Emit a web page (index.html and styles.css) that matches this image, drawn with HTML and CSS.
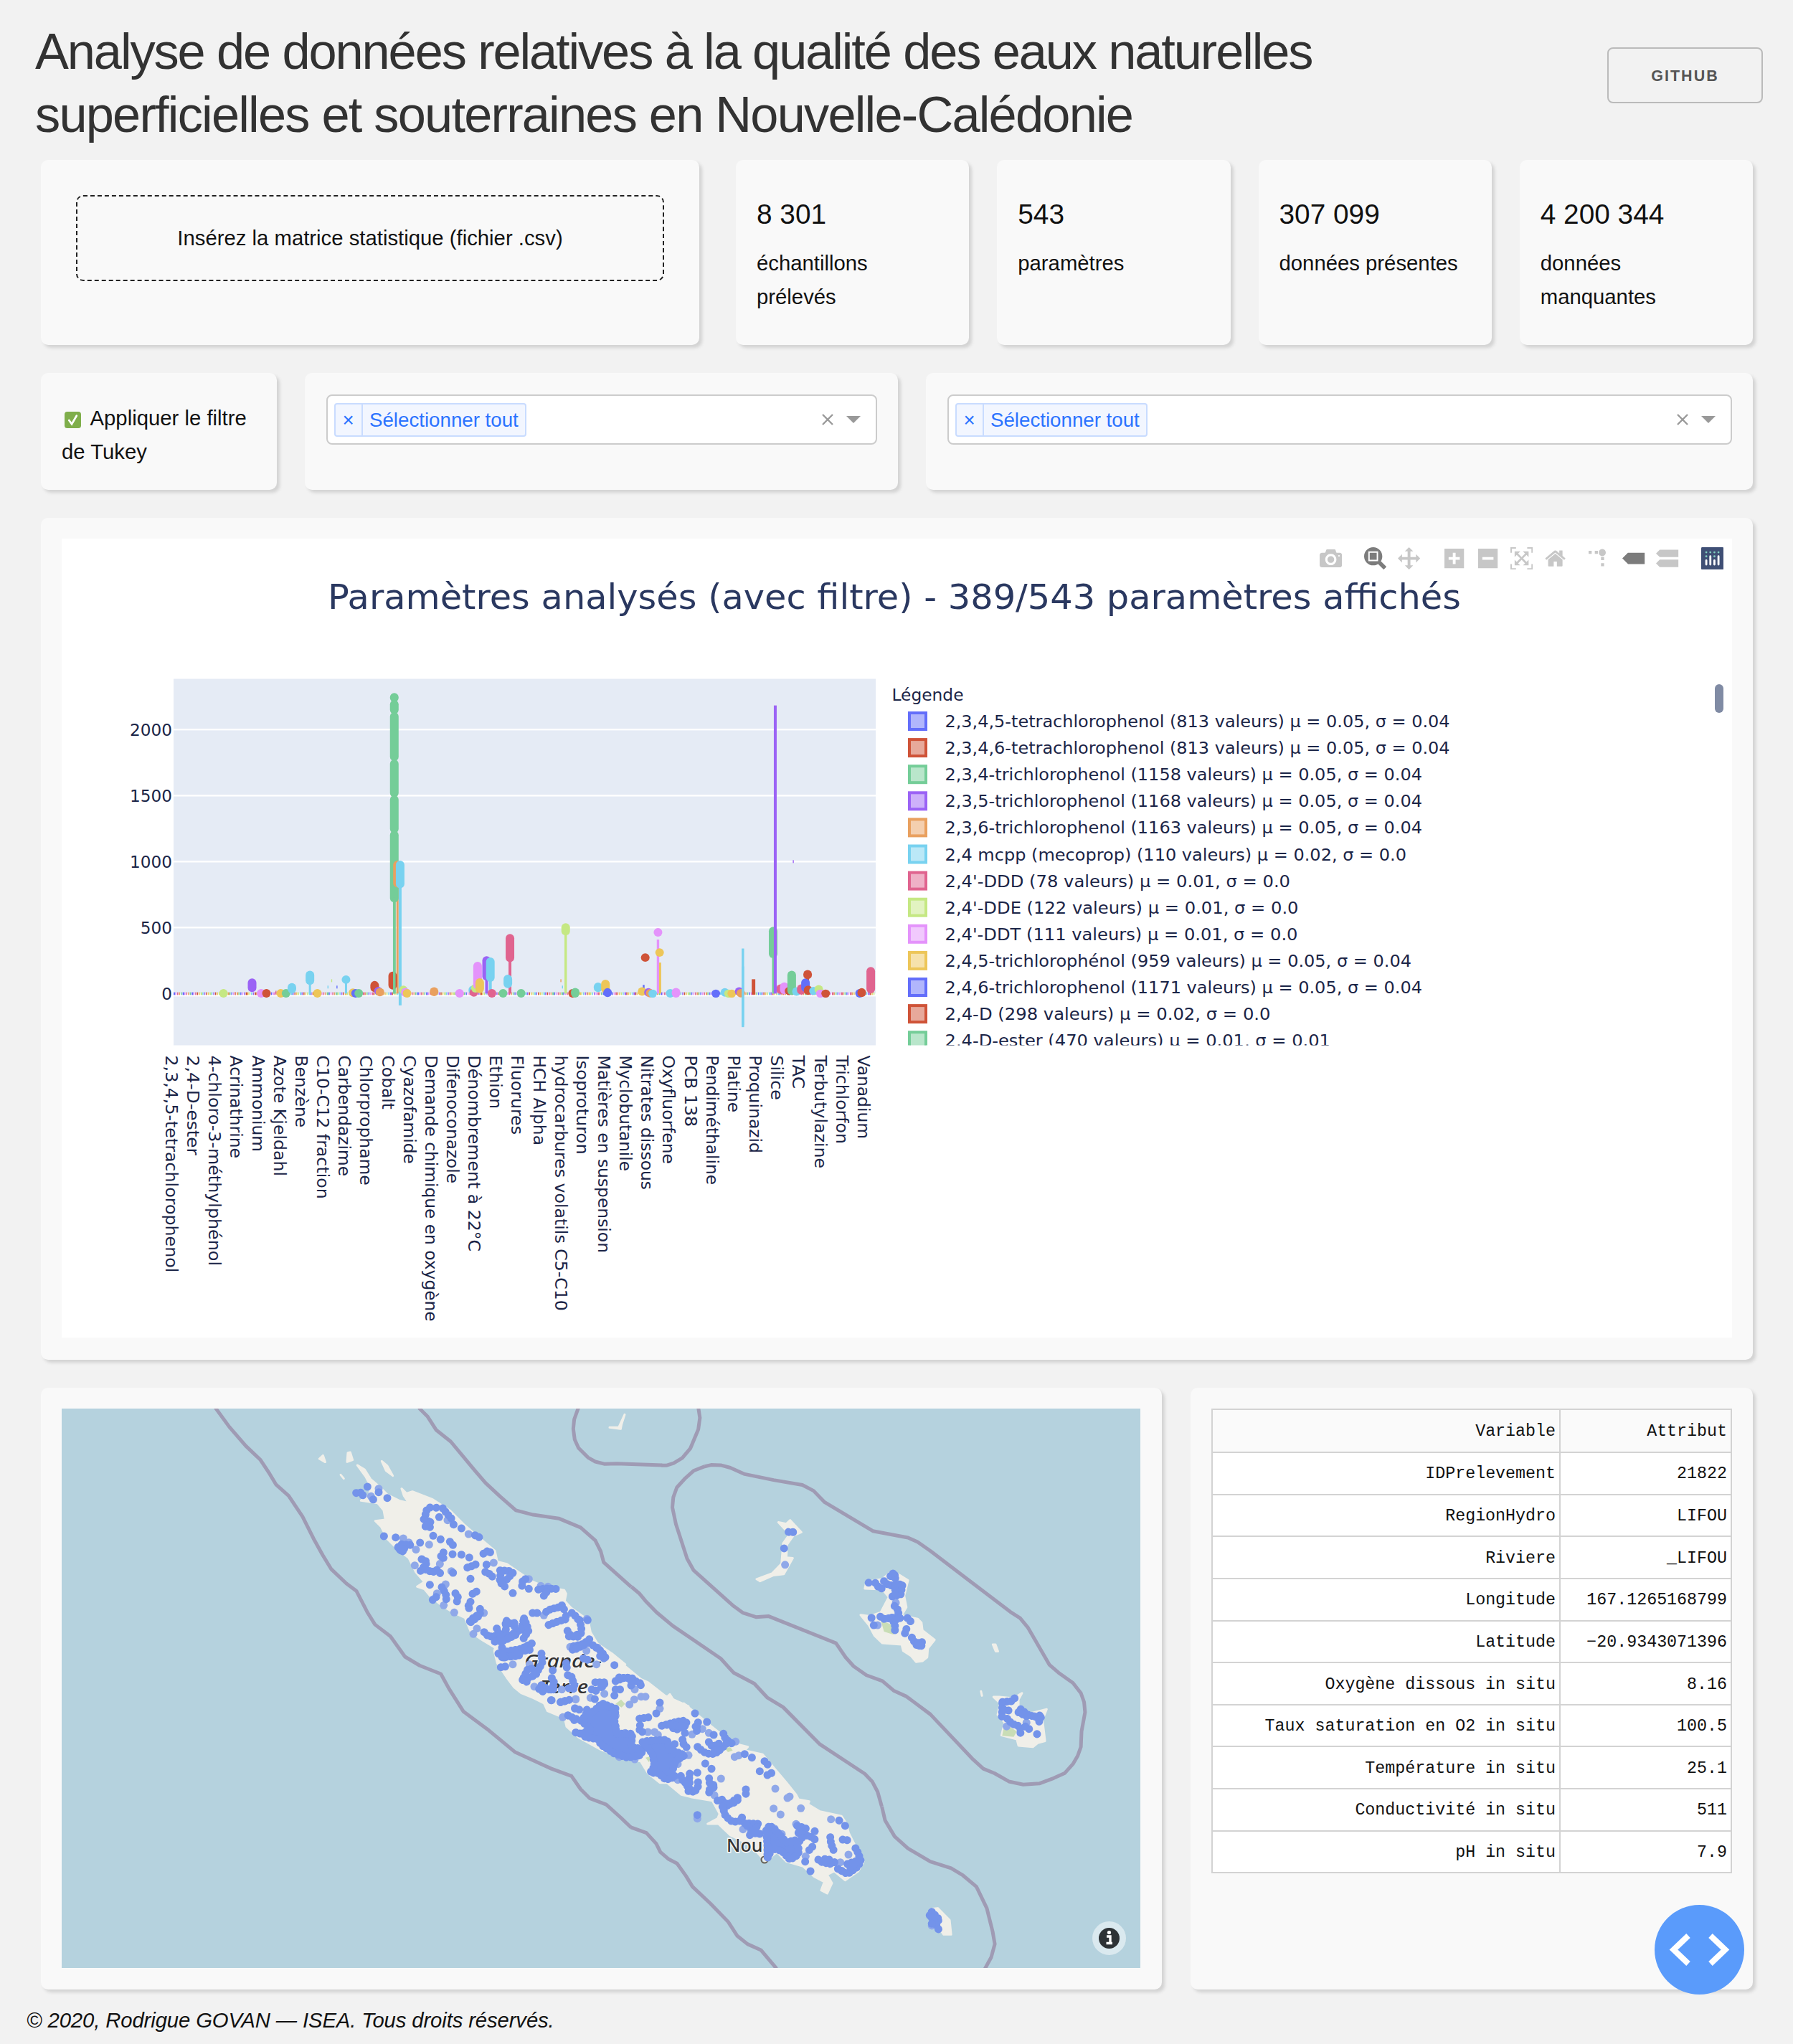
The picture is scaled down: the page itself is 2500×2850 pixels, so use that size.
FILE: index.html
```html
<!DOCTYPE html>
<html lang="fr">
<head>
<meta charset="utf-8">
<title>Qualité des eaux en Nouvelle-Calédonie</title>
<link rel="stylesheet" href="styles.css">
</head>
<body>
<header class="header">
  <h1 class="title"><span class="title-first">Analyse de données relatives à la qualité des eaux naturelles</span><br>superficielles et souterraines en Nouvelle-Calédonie</h1>
  <a class="github">GITHUB</a>
</header>

<main class="content">
  <section class="row row-stats">
    <div class="card card-upload"><div class="dropzone">Insérez la matrice statistique (fichier .csv)</div></div>
    <div class="stats">
      <div class="card stat"><strong class="stat-value">8 301</strong><span>échantillons prélevés</span></div>
      <div class="card stat"><strong class="stat-value">543</strong><span>paramètres</span></div>
      <div class="card stat"><strong class="stat-value">307 099</strong><span>données présentes</span></div>
      <div class="card stat"><strong class="stat-value">4 200 344</strong><span>données manquantes</span></div>
    </div>
  </section>

  <section class="row row-filters">
    <div class="card card-check">
      <svg class="check" viewBox="0 0 24 24"><rect width="24" height="24" rx="4" fill="#7fae4b"/><path d="M6.5 12.5l4 5.5L17.5 6" fill="none" stroke="#fff" stroke-width="2.8" stroke-linecap="round"/></svg>
      Appliquer le filtre<br>de Tukey
    </div>
    <div class="card card-select">
      <div class="select">
        <span class="chip"><span class="chip-x">×</span><span class="chip-label">Sélectionner tout</span></span>
        <svg class="clear" viewBox="0 0 18 18"><path d="M2 2L16 16M16 2L2 16" stroke="#999" stroke-width="2.4"/></svg>
        <span class="arrow"></span>
      </div>
    </div>
    <div class="card card-select card-select-wide">
      <div class="select">
        <span class="chip"><span class="chip-x">×</span><span class="chip-label">Sélectionner tout</span></span>
        <svg class="clear" viewBox="0 0 18 18"><path d="M2 2L16 16M16 2L2 16" stroke="#999" stroke-width="2.4"/></svg>
        <span class="arrow"></span>
      </div>
    </div>
  </section>

  <section class="card card-chart">
    <div class="chart">
      <svg class="chart-svg" viewBox="86 752 2328 1114">
        <text class="chart-title" x="457" y="850" textLength="1580" lengthAdjust="spacingAndGlyphs">Paramètres analysés (avec filtre) - 389/543 paramètres affichés</text>
        <rect x="242" y="947.5" width="979" height="511" fill="#e5ebf5"/>
        <g id="grid"></g>
        <g id="traces"></g>
        <g id="labels"></g>
        <clipPath id="legend-clip"><rect x="1240" y="940" width="1160" height="518.5"/></clipPath>
        <g id="legend" clip-path="url(#legend-clip)"></g>
        <rect x="2391" y="955" width="12" height="40" rx="6" fill="#808ba4"/>
      </svg>
      <div class="modebar">
        <span class="tools"><svg viewBox="0 0 1000 1000"><path transform="matrix(1 0 0 -1 0 850)" d="m500 450c-83 0-150-67-150-150 0-83 67-150 150-150 83 0 150 67 150 150 0 83-67 150-150 150z m400 150h-120c-16 0-34 13-39 29l-31 93c-6 15-23 28-40 28h-340c-16 0-34-13-39-28l-31-94c-6-15-23-28-40-28h-120c-55 0-100-45-100-100v-450c0-55 45-100 100-100h800c55 0 100 45 100 100v450c0 55-45 100-100 100z m-400-550c-138 0-250 112-250 250 0 138 112 250 250 250 138 0 250-112 250-250 0-138-112-250-250-250z m365 380c-19 0-35 16-35 35 0 19 16 35 35 35 19 0 35-16 35-35 0-19-16-35-35-35z"/></svg></span>
        <span class="tools"><svg class="active" viewBox="0 0 1000 1000"><path transform="matrix(1 0 0 -1 0 850)" d="m1000-25l-250 251c40 63 63 138 63 218 0 224-182 406-407 406-224 0-406-182-406-406s183-406 407-406c80 0 155 22 218 62l250-250 125 125z m-812 250l0 438 437 0 0-438-437 0z m62 375l313 0 0-312-313 0 0 312z"/></svg><svg viewBox="0 0 1000 1000"><path transform="matrix(1 0 0 -1 0 850)" d="m1000 350l-187 188 0-125-250 0 0 250 125 0-188 187-187-187 125 0 0-250-250 0 0 125-188-188 186-187 0 125 252 0 0-250-125 0 187-188 188 188-125 0 0 250 250 0 0-126 187 188z"/></svg></span>
        <span class="tools"><svg viewBox="0 0 875 1000"><path transform="matrix(1 0 0 -1 0 850)" d="m1 787l0-875 875 0 0 875-875 0z m687-500l-187 0 0-187-125 0 0 187-188 0 0 125 188 0 0 187 125 0 0-187 187 0 0-125z"/></svg><svg viewBox="0 0 875 1000"><path transform="matrix(1 0 0 -1 0 850)" d="m0 788l0-876 875 0 0 876-875 0z m688-500l-500 0 0 125 500 0 0-125z"/></svg><svg viewBox="0 0 1000 1000"><path transform="matrix(1 0 0 -1 0 850)" d="m250 850l-187 0-63 0 0-62 0-188 63 0 0 188 187 0 0 62z m688 0l-188 0 0-62 188 0 0-188 62 0 0 188 0 62-62 0z m-875-938l0 188-63 0 0-188 0-62 63 0 187 0 0 62-187 0z m875 188l0-188-188 0 0-62 188 0 62 0 0 62 0 188-62 0z m-125 188l-1 0-93-94-156 156 156 156 92-93 2 0 0 250-250 0 0-2 93-92-156-156-156 156 94 92 0 2-250 0 0-250 0 0 93 93 157-156-157-156-93 94 0 0 0-250 250 0 0 0-94 93 156 157 156-157-93-93 0 0 250 0 0 250z"/></svg><svg viewBox="0 0 928.6 1000"><path transform="matrix(1 0 0 -1 0 850)" d="m786 296v-267q0-15-11-26t-25-10h-214v214h-143v-214h-214q-15 0-25 10t-11 26v267q0 1 0 2t0 2l321 264 321-264q1-1 1-4z m124 39l-34-41q-5-5-12-6h-2q-7 0-12 3l-386 322-386-322q-7-4-13-4-7 2-12 7l-35 41q-4 5-3 13t6 12l401 334q18 15 42 15t43-15l136-114v109q0 8 5 13t13 5h107q8 0 13-5t5-13v-227l122-102q5-5 6-12t-4-13z"/></svg></span>
        <span class="tools"><svg viewBox="0 0 1000 1000"><path transform="matrix(1.5 0 0 -1.5 0 850)" d="M512 409c0-57-46-104-103-104-57 0-104 47-104 104 0 57 47 103 104 103 57 0 103-46 103-103z m-327-39l92 0 0 92-92 0z m-185 0l92 0 0 92-92 0z m370-186l92 0 0 93-92 0z m0-184l92 0 0 92-92 0z"/></svg><svg class="active" viewBox="0 0 1500 1000"><path transform="matrix(1 0 0 -1 0 850)" d="m375 725l0 0-375-375 375-374 0-1 1125 0 0 750-1125 0z"/></svg><svg viewBox="0 0 1125 1000"><path transform="matrix(1 0 0 -1 0 850)" d="m187 786l0 2-187-188 188-187 0 0 937 0 0 373-938 0z m0-499l0 1-187-188 188-188 0 0 937 0 0 376-938-1z"/></svg></span>
        <span class="tools"><svg class="brand" viewBox="0 0 132 132"><rect width="132" height="132" rx="6" fill="#3f4f75"/><g fill="#80cfbe"><circle cx="30" cy="30" r="6"/><circle cx="54" cy="30" r="6"/><circle cx="78" cy="30" r="6"/><circle cx="102" cy="30" r="6"/><circle cx="30" cy="54" r="6"/><circle cx="78" cy="54" r="6"/></g><path d="M30 78v24M54 54v48M78 78v24M102 54v48" stroke="#fff" stroke-width="12" stroke-linecap="round"/></svg></span>
      </div>
    </div>
  </section>

  <section class="row row-map">
    <div class="card card-map">
      <svg class="map" viewBox="86 1965 1504 780">
        <rect x="86" y="1965" width="1504" height="780" fill="#b5d2de"/>
        <g id="land" class="land"></g>
        <g id="parks" class="parks"></g>
        <g id="borders" class="borders"></g>
        <g class="places">
          <text x="731" y="2326" font-style="italic" textLength="108" lengthAdjust="spacingAndGlyphs">Grande-</text>
          <text x="753" y="2362" font-style="italic" textLength="67" lengthAdjust="spacingAndGlyphs">Terre</text>
          <text x="1013" y="2583">Nouméa</text>
          <circle cx="1066" cy="2594" r="4.5" fill="none" stroke="#665f55" stroke-width="2"/>
        </g>
        <g id="light" class="dots light"></g>
        <g id="solid" class="dots solid"></g>
        <circle cx="1546.5" cy="2703.5" r="23.5" fill="#fff" fill-opacity=".5"/>
        <circle cx="1546.5" cy="2703.5" r="14.5" fill="#2d3235"/>
        <path d="M1543 2701h5v9M1542.500 2710.500h8.500" fill="none" stroke="#fff" stroke-width="3.4"/><circle cx="1546.500" cy="2695.500" r="2.600" fill="#fff"/>
      </svg>
    </div>
    <div class="card card-table">
      <table class="table">
        <colgroup><col class="col-name"><col class="col-value"></colgroup>
        <thead><tr><th>Variable</th><th>Attribut</th></tr></thead>
        <tbody>
          <tr><td>IDPrelevement</td><td>21822</td></tr>
          <tr><td>RegionHydro</td><td>LIFOU</td></tr>
          <tr><td>Riviere</td><td>_LIFOU</td></tr>
          <tr><td>Longitude</td><td>167.1265168799</td></tr>
          <tr><td>Latitude</td><td>−20.9343071396</td></tr>
          <tr><td>Oxygène dissous in situ</td><td>8.16</td></tr>
          <tr><td>Taux saturation en O2 in situ</td><td>100.5</td></tr>
          <tr><td>Température in situ</td><td>25.1</td></tr>
          <tr><td>Conductivité in situ</td><td>511</td></tr>
          <tr><td>pH in situ</td><td>7.9</td></tr>
        </tbody>
      </table>
      <svg class="debug" viewBox="0 0 125 125"><circle cx="62.5" cy="62.5" r="62.5" fill="#5a9bfb"/><path d="M47 43L26.500 62.500 47 82M78 43L98.500 62.500 78 82" fill="none" stroke="#fff" stroke-width="8"/></svg>
    </div>
  </section>
</main>
<footer class="footer">© 2020, Rodrigue GOVAN — ISEA. Tous droits réservés.</footer>
<script src="script.js"></script>
</body>
</html>
```

FILE: styles.css
```css
* { box-sizing: border-box; }

body {
  margin: 0;
  height: 2850px;
  overflow: hidden;
  background: #f2f2f2;
  color: #111;
  font-family: "Liberation Sans", Arial, sans-serif;
  font-size: 29.3px;
  line-height: 47px;
}

.header {
  display: flex;
  justify-content: space-between;
  align-items: flex-start;
  height: 223px;
  padding: 28px 42px 0 49px;
}

.title {
  margin: 0;
  font-size: 70.4px;
  font-weight: 400;
  line-height: 88px;
  letter-spacing: -1.8px;
  color: #323232;
}
.title-first { letter-spacing: -2.12px; }

.github {
  width: 217px;
  height: 78px;
  margin-top: 38px;
  border: 2px solid #bbb;
  border-radius: 8px;
  color: #555;
  font-size: 21.5px;
  font-weight: 700;
  line-height: 76px;
  letter-spacing: 2px;
  text-align: center;
}

.content { padding: 0 56px 0 57px; }

.row { display: flex; }

.card {
  background: #f9f9f9;
  border-radius: 10px;
  box-shadow: 4px 4px 4px lightgrey;
}

.row-stats { height: 258px; gap: 51px; margin-bottom: 39px; }
.card-upload { width: 918px; padding: 49px; }
.dropzone {
  height: 120px;
  border: 2px dashed #222;
  border-radius: 10px;
  line-height: 116px;
  text-align: center;
}
.stats { flex: 1; display: grid; grid-template-columns: repeat(4, 1fr); gap: 39px; }
.stat { display: flex; flex-direction: column; padding: 49px 29px 0; }
.stat-value { margin-bottom: 18px; font-size: 38.8px; font-weight: 400; line-height: 53px; }

.row-filters { height: 163px; gap: 39px; margin-bottom: 39px; }
.card-check { width: 329px; padding: 39px 20px 0 29px; }
.check { width: 23px; height: 23px; margin: 0 6px 0 4px; vertical-align: -4px; }
.card-select { width: 827px; padding: 29.500px; }
.card-select-wide { width: auto; flex: 1; }
.select {
  display: flex;
  align-items: center;
  height: 70px;
  padding: 0 21px 0 9px;
  background: #fff;
  border: 2px solid #ccc;
  border-radius: 8px;
}
.chip {
  display: flex;
  height: 47px;
  margin-right: auto;
  margin-top: 2px;
  background: #f2f6ff;
  border: 2px solid #c9dcff;
  border-radius: 4px;
  color: #2b73ff;
  font-size: 27.7px;
  line-height: 43px;
}
.chip-x { width: 38px; border-right: 2px solid #c9dcff; text-align: center; }
.chip-label { padding: 0 9.500px; }
.clear { width: 18px; height: 18px; margin-right: 17px; }
.arrow { border: 10px solid transparent; border-top-color: #999; border-bottom: 0; }

.card-chart { height: 1174px; padding: 29px; margin-bottom: 39px; }
.chart { position: relative; height: 1114px; background: #fff; }
.chart-svg { display: block; width: 2328px; height: 1114px; }
.chart-svg text { font-family: "DejaVu Sans", Verdana, sans-serif; font-size: 23.2px; fill: #1b2547; }
.chart-svg .chart-title { font-size: 48.5px; fill: #2a3860; }

.modebar { position: absolute; top: 12px; right: 4px; display: flex; gap: 15.600px; }
.tools { display: flex; }
.tools svg { width: 31.200px; height: 31.200px; margin: 0 7.900px; fill: #c7c7c7; }
.tools .active { fill: #7c7c7c; }

.row-map { height: 839px; gap: 40px; }
.card-map { width: 1563px; padding: 29px; }
.map { display: block; width: 1504px; height: 780px; }
.land { fill: #f0efe9; stroke: #f0efe9; stroke-width: 3px; stroke-linejoin: round; }
.parks { fill: #c9ddb6; }
.borders { fill: none; stroke: #9f9bb4; stroke-width: 5px; stroke-linejoin: round; }
.places text { font-family: "Noto Sans", sans-serif; font-size: 25px; font-weight: 500; fill: #333; stroke: #f7f6f3; stroke-width: 3px; paint-order: stroke; }
.dots { stroke-width: 11px; stroke-linecap: round; stroke-linejoin: round; stroke-dasharray: .1 6; fill: none; }
.light { stroke: #8fa8e9; }
.solid { stroke: #7393ea; }
.solid .area { fill: #7393ea; }
.map path { vector-effect: non-scaling-stroke; }

.card-table { position: relative; flex: 1; padding: 29px; }
.table {
  width: 726px;
  border-collapse: collapse;
  table-layout: fixed;
  background: #fff;
  font-family: "Liberation Mono", "Courier New", monospace;
  font-size: 23.3px;
  line-height: 30px;
}
.col-name { width: 485px; }
.table th, .table td {
  height: 58.650px;
  padding: 2px 5px 0 0;
  border: 2px solid #d3d3d3;
  font-weight: 400;
  text-align: right;
}
.table th { height: 60px; background: #fafafa; }
.debug { position: absolute; right: 12px; bottom: -7px; width: 125px; height: 125px; }

.footer { padding: 19px 0 0 37px; font-style: italic; letter-spacing: -.12px; }
```

FILE: script.js
```js
const NS = 'http://www.w3.org/2000/svg';
function add(parent, tag, attrs, text) {
  const el = document.createElementNS(NS, tag);
  for (const k in attrs) el.setAttribute(k, attrs[k]);
  if (text) el.textContent = text;
  document.getElementById(parent).appendChild(el);
  return el;
}

const C = { b: '#636efa', r: '#cf5338', g: '#74cd98', p: '#9b63f5', o: '#e9a05f', c: '#78d2f0', k: '#e0648f', l: '#c5e883', m: '#e493fb', y: '#edc659' };
const order = 'brgpocklmy';

/* Box plot: axis, then whiskers, then outlier runs */
const X = v => 80 + v * 0.7398;
const Y = w => 920 + w * 0.3571;

[[2000, 275], [1500, 533], [1000, 790.5], [500, 1048], [0, 1306]].forEach(([n, w]) => {
  add('grid', 'rect', { x: 242, y: Y(w) - (n ? 1.2 : 0), width: 979, height: n ? 2.4 : 4, fill: '#fff' });
  add('labels', 'text', { x: 240, y: Y(w) + 8.3, 'text-anchor': 'end' }, String(n));
});

for (let i = 0; i < 389; i++) {
  const color = C[order[(i * 7 + (i % 13)) % 10]];
  add('traces', 'rect', { x: 242 + i * 2.515, y: 1384.6, width: i % 5 ? 1.5 : 2.4, height: 3.8, fill: color });
}
[[335, 1300, 'o'], [412, 1295, 'k'], [517, 1250, 'l'], [510, 1275, 'c'], [527, 1275, 'b'], [949, 1250, 'o'], [952, 1275, 'c'], [1387, 785, 'p']].forEach(([x, y, c]) =>
  add('traces', 'rect', { x: X(x) - 0.7, y: Y(y), width: 1.4, height: 4, fill: C[c] }));

const runs = [
  [313,1288,1322,'l'],[367,1247,1300,'p'],[384,1288,1322,'m'],[394,1288,1322,'r'],[421,1288,1322,'y'],[431,1288,1322,'g'],[442,1265,1305,'c'],[476,1217,1272,'c'],
  [490,1288,1322,'y'],[544,1235,1268,'c'],[557,1286,1320,'y'],[562,1288,1322,'b'],[568,1288,1322,'g'],[598,1257,1300,'r'],[605,1280,1312,'p'],[608,1284,1317,'o'],[632,1220,1290,'r'],
  [652,1275,1308,'l'],[656,1284,1320,'m'],[659,1288,1322,'y'],[641,787,892,'o'],[710,1281,1316,'o'],[758,1288,1322,'m'],[783,1275,1310,'c'],[785,1285,1318,'k'],[788,1268,1302,'l'],
  [792,1182,1290,'m'],[796,1246,1304,'y'],[809,1160,1255,'p'],[816,1165,1260,'c'],[819,1288,1322,'k'],[840,1288,1322,'g'],[849,1232,1285,'c'],[853,1073,1183,'k'],[874,1288,1322,'g'],
  [958,1031,1079,'l'],[971,1288,1322,'r'],[976,1284,1322,'g'],[1019,1263,1300,'c'],[1033,1252,1305,'y'],[1037,1285,1320,'b'],[1102,1281,1315,'y'],[1108,1149,1182,'r'],[1114,1285,1318,'p'],
  [1117,1288,1321,'o'],[1122,1290,1322,'c'],[1132,1050,1084,'m'],[1135,1129,1162,'y'],[1155,1288,1322,'c'],[1166,1284,1322,'m'],[1241,1290,1322,'b'],[1258,1285,1318,'c'],
  [1265,1290,1322,'l'],[1271,1290,1322,'y'],[1285,1281,1315,'p'],[1288,1288,1321,'o'],[1349,1045,1168,'g'],[1363,1270,1308,'k'],[1370,1262,1308,'m'],[1379,1280,1312,'r'],
  [1384,1217,1312,'g'],[1393,1281,1315,'c'],[1402,1270,1310,'k'],[1410,1247,1300,'b'],[1414,1214,1250,'r'],[1415,1275,1311,'r'],[1425,1280,1312,'c'],[1435,1273,1307,'l'],
  [1438,1290,1322,'m'],[1448,1290,1322,'r'],[1512,1288,1322,'b'],[1516,1285,1320,'r'],[1533,1202,1305,'k']
];
const stems = [
  [635,940,1306,'g',3.6],[641,850,1306,'o',3],[646,880,1352,'c',4],[476,1260,1306,'c',3],[544,1260,1306,'c',3],[853,1170,1306,'k',4],[809,1250,1306,'p',4],[816,1250,1300,'c',4],
  [958,1070,1306,'l',3.4],[1132,1095,1306,'m',3.4],[1136,1185,1306,'y',3],[1105,1272,1290,'b',2.5],[1292,1130,1437,'c',3.4],[1312,1250,1310,'r',5],[1414,1240,1290,'r',4],[1349,1160,1306,'g',3]
];
stems.forEach(([x, a, b, c, w]) => add('traces', 'rect', { x: X(x) - w / 2, y: Y(a), width: w, height: Y(b) - Y(a), fill: C[c] }));
const capsule = (x, a, b, c) => add('traces', 'rect', { x: X(x) - 6, y: Y(a), width: 12, height: Y(b) - Y(a), rx: 6, fill: C[c] });
[[132, 168], [160, 215], [207, 398], [392, 540], [532, 680], [670, 950]].forEach(([a, b]) => capsule(635, a, b, 'g'));
runs.forEach(r => capsule(...r));
capsule(646, 787, 895, 'c');
add('traces', 'rect', { x: X(635) - 1.8, y: Y(930), width: 3.6, height: Y(1306) - Y(930), fill: C.g });
add('traces', 'rect', { x: X(1353) - 2, y: Y(181), width: 4, height: Y(1306) - Y(181), fill: C.p });
add('traces', 'rect', { x: X(1292) - 1.7, y: Y(1200), width: 3.4, height: Y(1430) - Y(1200), fill: C.c });

const ticks = [['2,3,4,5-tetrachlorophenol',1774.3],['2,4-D-ester',1610.7],['4-chloro-3-méthylphénol',1765],['Acrinathrine',1615],['Ammonium',1606],['Azote Kjeldahl',1640],['Benzène',1572],['C10-C12 fraction',1671.7],['Carbendazime',1640],['Chlorprophame',1652.7],['Cobalt',1547],['Cyazofamide',1622.7],['Demande chimique en oxygène',1842.7],['Difenoconazole',1650],['Dénombrement à 22°C',1745],['Ethion',1546],['Fluorures',1582],['HCH Alpha',1597],['hydrocarbures volatils C5-C10',1827.7],['Isoproturon',1609.7],['Matières en suspension',1747],['Myclobutanile',1633],['Nitrates dissous',1659],['Oxyfluorfene',1623],['PCB 138',1571],['Pendiméthaline',1652],['Platine',1551],['Proquinazid',1608],['Silice',1533.7],['TAC',1518],['Terbutylazine',1629],['Trichlorfon',1595],['Vanadium',1588]];
ticks.forEach(([t, end], i) => {
  const x = 231 + i * 30.15;
  add('labels', 'text', { transform: `translate(${x} 1472.5) rotate(90)`, textLength: end - 1471.5, lengthAdjust: 'spacingAndGlyphs' }, t);
});

add('legend', 'text', { x: 1243.5, y: 977.5, textLength: 100, lengthAdjust: 'spacingAndGlyphs' }, 'Légende');
[['2,3,4,5-tetrachlorophenol (813 valeurs) μ = 0.05, σ = 0.04',2020.5],['2,3,4,6-tetrachlorophenol (813 valeurs) μ = 0.05, σ = 0.04',2020.5],['2,3,4-trichlorophenol (1158 valeurs) μ = 0.05, σ = 0.04',1982],['2,3,5-trichlorophenol (1168 valeurs) μ = 0.05, σ = 0.04',1982],['2,3,6-trichlorophenol (1163 valeurs) μ = 0.05, σ = 0.04',1982],['2,4 mcpp (mecoprop) (110 valeurs) μ = 0.02, σ = 0.0',1960],["2,4'-DDD (78 valeurs) μ = 0.01, σ = 0.0",1798],["2,4'-DDE (122 valeurs) μ = 0.01, σ = 0.0",1809.5],["2,4'-DDT (111 valeurs) μ = 0.01, σ = 0.0",1808.5],['2,4,5-trichlorophénol (959 valeurs) μ = 0.05, σ = 0.04',1967],['2,4,6-trichlorophenol (1171 valeurs) μ = 0.05, σ = 0.04',1982],['2,4-D (298 valeurs) μ = 0.02, σ = 0.0',1770.5],['2,4-D-ester (470 valeurs) μ = 0.01, σ = 0.01',1854]].forEach(([t, end], i) => {
  const y = 1006.5 + i * 37.1, c = C[order[i % 10]];
  add('legend', 'rect', { x: 1268, y: y - 11.5, width: 23, height: 23, fill: c, 'fill-opacity': 0.5, stroke: c, 'stroke-width': 4 });
  add('legend', 'text', { x: 1317.5, y: y + 8.5, textLength: end - 1316.5, lengthAdjust: 'spacingAndGlyphs' }, t);
});

/* Map tiles: each one has its own origin and scale */
const T = {
  a: 'translate(80 1960) scale(.5102)',
  n: 'translate(460 1960) scale(.33333)',
  s: 'translate(730 2340) scale(.33333)',
  l: 'translate(900 1960) scale(.4464 .3571)',
  p: 'translate(750 2250) scale(.4145 .3333)'
};
const draw = (layer, tile, pts, closed, cls) => add(layer, 'path', { d: 'M' + pts + (pts.indexOf(' ') < 0 ? 'h.01' : closed ? 'Z' : ''), transform: T[tile], class: cls || '' });

[['n','300,350 320,370 345,362 430,395 500,440 560,500 630,560 690,610 700,655 740,665 790,700 850,740 900,760 980,775 988,790 982,820 1010,850 1080,900 1090,950 1120,1000 1180,1040 1235,1085 1215,1100 1260,1130 1330,1160 1400,1215 1500,1260 1500,1500 1000,1300 900,1250 850,1225 800,1205 770,1180 740,1140 700,1080 688,1030 690,1015 640,985 590,950 565,890 520,870 470,840 420,800 395,770 365,760 395,740 360,700 330,640 280,600 240,560 215,510 190,485 232,480 225,440 200,410 130,400 165,375 170,340 150,300 115,252 145,270 170,310 205,340 240,375 290,400 330,410 310,380'],
 ['n','217,235 240,255 263,296 235,275'],['n','75,200 85,198 95,230 72,238'],['n','45,292 58,308'],
 ['n','1170,94 1208,94 1233,40 1220,80 1216,100 1204,98'],['a','716,147 726,138 732,156'],
 ['s','500,15 530,30 570,70 580,100 612,70 655,140 672,140 670,108 720,150 780,200 830,240 890,278 938,290 925,305 1000,322 1040,370 1100,440 1140,490 1150,510 1195,518 1190,530 1240,560 1330,580 1350,610 1360,650 1380,690 1422,770 1400,810 1345,848 1300,810 1270,825 1290,860 1270,903 1245,890 1258,855 1215,832 1170,790 1100,770 1060,730 1010,770 985,740 950,700 865,660 815,612 770,612 812,590 820,570 790,515 700,500 660,490 600,440 570,440 520,400 490,350 420,340 320,300 230,250 180,205 172,170 100,140 80,95 0,30 0,-200 300,-150'],
 ['l','415,458 440,464 452,450 487,497 462,510 442,545 440,596 460,598 432,660 400,665 358,688 347,680 395,658 425,620 430,540 450,505'],
 ['l','685,717 690,690 740,680 770,648 795,665 820,685 808,745 815,790 800,822 850,835 862,850 865,880 903,917 882,950 880,985 865,1000 845,1003 830,980 805,960 800,935 740,930 715,900 698,860 672,820 700,825 735,810 760,750 740,720'],
 ['l','1087,1140 1105,1140 1150,1145 1176,1125 1165,1150 1165,1175 1200,1205 1253,1188 1240,1230 1248,1312 1225,1320 1210,1335 1165,1330 1160,1305 1112,1290 1122,1240 1100,1210 1108,1165'],
 ['l','1085,935 1093,935 1101,962 1094,962'],['l','1048,1118 1051,1135'],
 ['p','1320,1238 1345,1235 1385,1285 1390,1345 1365,1345 1340,1300']
].forEach(([t, p]) => draw('land', t, p, true));

[['l','735,840 772,860 775,897 745,885'],['l','1122,1243 1160,1275 1150,1296 1114,1292'],['s','385,110 408,92 425,110 410,125'],['s','840,295 865,292 875,305 855,312'],['s','510,335 530,330 525,355']].forEach(([t, p]) => draw('parks', t, p, true));

[['a','432,8 470,60 515,112 555,150 580,188 598,218 632,248 670,305 700,365 725,410 748,448 790,488 817,508 848,568 868,600 910,632 950,688 990,712 1048,735 1070,775 1110,838 1180,890 1250,948 1350,994 1405,1014 1430,1050 1455,1075 1500,1092 1540,1128 1568,1155'],
 ['p','313,897 365,920 398,965 412,1000 440,1030 468,1048 498,1100 520,1145 580,1215 640,1292 670,1350 705,1385 750,1410 803,1488'],
 ['a','988,8 1012,32 1035,68 1075,100 1140,178 1170,213 1210,250 1253,288 1300,300 1370,310 1430,335 1470,370 1485,400 1493,430 1568,497'],
 ['l','-44,710 -20,735 0,765 35,810 85,862 235,990 275,1045 340,1088 380,1142 430,1180 545,1325 685,1440 708,1470 725,1510 738,1568'],
 ['p','1157,810 1168,868 1200,935 1245,985 1320,1040 1390,1068 1430,1098 1475,1145 1510,1235 1530,1335 1537,1385 1525,1440 1503,1490'],
 ['n','1040,10 1022,60 1018,100 1024,145 1040,180 1080,220 1110,237 1150,247 1200,245 1390,252'],
 ['l','50,236 65,236 88,227 115,207 140,170 165,95 170,50 165,10'],
 ['l','185,240 205,234 235,235 265,245 310,270 400,293 490,312 525,335 560,380 710,492 820,518 850,535 890,570 1000,675 1140,808 1170,832 1195,870 1262,1015 1290,1045 1335,1085 1360,1125 1370,1160 1373,1200 1362,1275 1360,1335 1350,1370 1335,1402 1310,1437 1275,1457 1230,1478 1180,1482 1135,1470 1090,1438 1055,1420 1020,1380 890,1208 815,1138 775,1115 740,1078 690,1055 650,1020 625,985 595,930 385,825 345,828 305,812 275,785 150,645 130,600 95,465 84,400 87,360 98,322 125,285 150,257 185,240']
].forEach(([t, p]) => draw('borders', t, p, false));

const dots = (layer, tile, list) => list.split(';').forEach(p => draw(layer, tile, p.trim(), false));
dots('light', 'n', '204,350;172,382;307,558;330,575;360,605;415,584;355,671;460,665 462,655;484,750;448,788;476,838;520,868;615,935;600,958;644,870;580,540;492,482;685,660;832,728;882,757;912,760;855,1178;1073,1028;765,1085;970,1190;1028,1230;508,695;895,880;1120,1015;1075,895;1005,1012;1115,1085;835,1085');
dots('light', 's', '1053,465;1113,498;1104,504;1160,547;1046,548;1075,573;826,423;883,332;900,326;1286,593;1359,741;727,590;918,635;1080,655;1180,748;443,113;463,92;492,80;510,80;164,166;185,158;385,160;218,92;520,228;548,228;562,240;705,238;748,215;775,232;887,268;338,68;425,232;645,428;798,492;385,205;280,85;570,130;1140,613;1050,632;1325,773;215,128;465,50;690,325;645,362;400,332;465,342');
dots('solid', 'n', '110,368 135,366 140,387;157,342;204,365;181,395 184,398;240,389;226,549 236,540;275,554;285,595 305,618 303,590 335,585 348,597;300,583 325,585;292,604 318,600;377,576;432,547;463,562 465,570;502,572 518,590;400,458 402,443 420,428;445,430 450,417;472,432 490,455 508,475;517,500 533,503;550,516 565,518;457,469;393,478 420,490;400,508 424,512;420,490 405,505;607,545 632,557;475,617 462,637 487,643;513,624;550,626 554,629;583,638;384,645 408,657 395,675 376,698;400,688 430,700 445,688 470,712;515,702;575,680 605,670 620,660;642,622 665,608 678,628;655,668 661,664;650,698 678,712 680,725;712,692 760,695;765,703 735,735;715,695 710,740 733,761;588,727;765,787;806,738 802,770;818,728;832,769;872,772 900,768 955,770 957,775;895,798 915,770;418,752 424,756;468,762 485,790 487,815;430,815 448,800;525,788 535,803 530,830;597,790 622,775;588,823 575,850 590,850;628,853 628,873 600,890 583,908;590,908 620,885;848,870 880,870;905,865 930,850 945,852 970,838 985,865;915,920 955,905 990,895 985,870;1012,870 1030,885 1040,900;1045,900 1052,935 1050,955 1010,970 992,942;1000,968 1040,970;1078,900 1082,912;1085,980 1060,1000 1015,1010 1015,1040;1030,1020 1090,990;1100,1005 1135,1030 1155,1060;1130,1050 1150,1062;1060,1060 1085,1068;1190,1088;645,950 665,970 690,965 710,980 735,950 740,892;698,935 710,965 750,965 800,940 812,893;735,915 775,912 770,940;812,893 825,925 830,945 805,985;690,990 730,985 780,960;705,1040 745,1030 800,1020 845,997;720,1055 790,1050 800,1030 850,1022;720,1015 720,1060 745,1050;715,1097 750,1092;885,1040 888,1078 860,1130 806,1150 828,1105 860,1100;806,1150 828,1160;932,1110;928,1142 940,1165 925,1190;988,1080 992,1105;995,1130 1010,1135 1025,1180;885,1172 910,1190 950,1190;1000,1185 1025,1188;875,1188 900,1205;925,1235 940,1236;965,1243 1003,1233');
dots('solid', 's', '300,20 345,20 320,45 340,30;285,50 320,60;298,90 303,95;385,15 430,-2 490,25;400,0 470,5;490,32 494,22;380,75 384,78;385,50 410,50;450,15 450,45;117,95 130,95;155,103 190,95;570,105;555,150;485,172 535,165;487,200 485,225 500,228;215,130 235,135;212,178 225,175 210,170 185,158;218,230 240,235;632,278;578,202 640,185 675,180 685,195 640,218 610,205;600,198 680,205;675,232;665,260 670,280 685,295;717,150;767,186;730,188 722,215 728,232;720,205 735,210;795,240 805,240;836,235 845,258 870,275 882,270;728,290 745,305 765,318 800,320 835,290 850,275;775,270 790,290 820,275;800,305 830,305;760,360 766,352;786,382 792,376;727,398;695,402 692,430 682,450 705,478;690,475 712,478;730,438 730,455 718,475;658,412 670,440 695,440;776,422 778,440 795,450 775,482;795,460 775,470;930,468 930,493;895,503 860,530 840,545 835,510 800,517;895,513 870,530 835,525;832,540 845,580 875,605 905,600 917,580;925,610 980,612;935,620 960,640 945,662;975,625 950,650 1000,655;1145,620 1182,632;1150,650 1200,665 1230,685;1165,670 1150,690;1218,643;1208,708 1192,725;1283,668 1286,695 1298,725;1178,770;1200,810 1204,806;1233,762 1240,770 1280,780 1308,770;1260,760 1280,762;1315,800 1355,822 1400,790 1410,765 1400,735 1388,713;1355,780 1400,765 1360,800;1320,598 1325,600;1345,620 1349,635;1335,678 1368,682;988,392;1020,408 1042,397;1008,350 1025,368;925,320;955,335 967,327;727,575');
['265,135 268,160 300,135 328,108 385,130 380,180 390,235 455,235 450,290 500,300 490,325 435,335 380,318 325,282 310,258 260,250 245,235 280,215 240,180 260,160', '498,270 520,265 600,260 610,300 675,325 635,350 620,400 635,415 595,428 565,400 530,398 548,370 540,320', '1015,640 1030,618 1065,650 1100,690 1135,680 1150,710 1150,740 1115,762 1080,725 1040,715 1020,755 1020,700'].forEach(p => draw('solid', 's', p, true, 'area'));
dots('solid', 'l', '447,496 468,497;433,560;697,694;718,695 730,715 750,718;745,688 760,705 800,700;802,705 797,740 770,748;780,705 780,745;765,668 782,664 778,690;773,658;778,785 792,805 785,830 745,835 725,820;706,831;713,860;770,830 780,865 778,895;795,832 770,845;818,832 832,850;815,875 808,900;832,908 842,930 852,945 870,915;862,940 850,928;1115,1160 1155,1155;1153,1145;1115,1165 1113,1222;1120,1190 1145,1195;1130,1225 1145,1245 1170,1255 1172,1295;1172,1188 1195,1210 1225,1220 1240,1203;1165,1200 1190,1215;1235,1220 1225,1250;1198,1265 1180,1250;1223,1285 1223,1297');
dots('light', 'l', '436,624;725,860;782,772;1128,1255;1190,1240;1215,1215');
dots('solid', 'p', '1318,1265 1325,1250;1325,1250 1352,1285 1335,1290;1325,1275 1340,1305 1350,1330;1325,1300');
dots('light', 'p', '1325,1308');
```
